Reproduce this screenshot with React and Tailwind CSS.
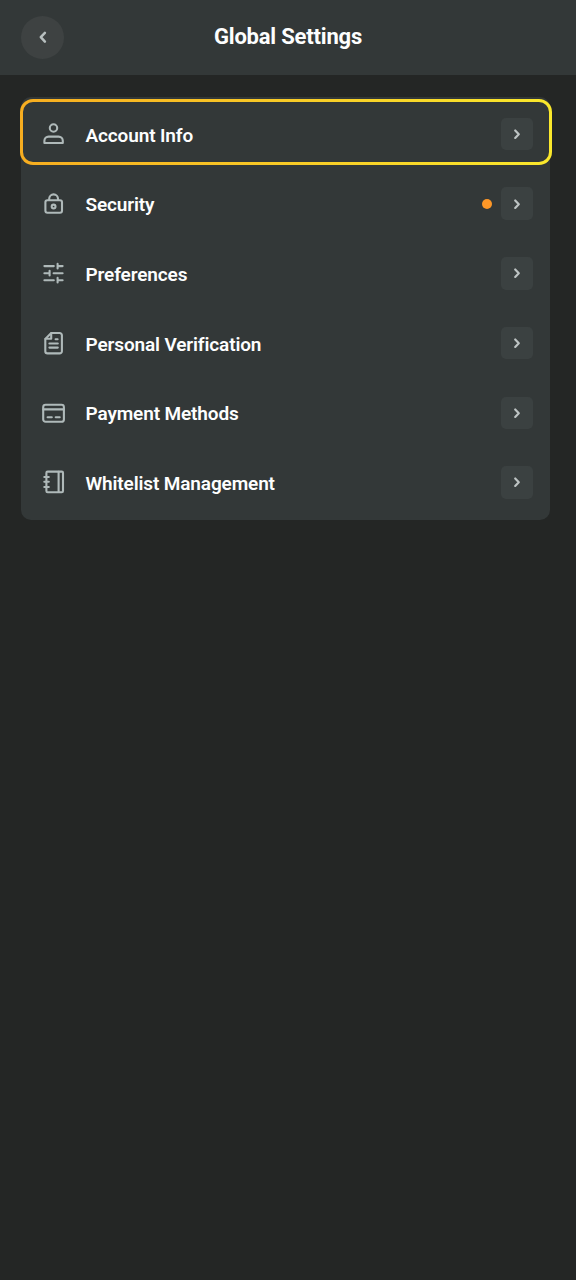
import React from "react";

const Icon = ({ children }) => (
  <svg
    className="h-7 w-7 shrink-0 text-[#afb9b9]"
    viewBox="0 0 28 28"
    fill="none"
    stroke="currentColor"
    strokeWidth="2.1"
    strokeLinecap="round"
    strokeLinejoin="round"
  >
    {children}
  </svg>
);

const AccountIcon = () => (
  <Icon>
    <circle cx="13.5" cy="8" r="3.7" />
    <path d="M4.4 23v-2.2a4.2 4.2 0 0 1 4.2-4.2h10a4.2 4.2 0 0 1 4.2 4.2V23z" />
  </Icon>
);

const LockIcon = () => (
  <Icon>
    <rect x="5.4" y="10.2" width="16.6" height="12.6" rx="2" />
    <path d="M9.2 10V8.8a4.4 4.4 0 0 1 8.8 0V10" />
    <circle cx="13.6" cy="16.5" r="1.9" />
  </Icon>
);

const SlidersIcon = () => (
  <Icon>
    <path d="M4.4 7.1h9.4M17.6 4.9v4.6M17.6 7.1h5" />
    <path d="M4.4 14.2h4.6M9.6 11.7v4.8M13.6 14.2h9" />
    <path d="M4.4 21.2h9.4M17.6 18.9v4.6M17.6 21.2h5" />
  </Icon>
);

const DocumentIcon = () => (
  <Icon>
    <path d="M11.2 4h8.5a2.2 2.2 0 0 1 2.2 2.2v16a2.2 2.2 0 0 1-2.2 2.2H7.5a2.2 2.2 0 0 1-2.2-2.2V9.9z" />
    <path d="M11.2 4.4v5.4H5.6" />
    <path d="M15.6 10.3h2M9.4 14.5h8.4M9.4 18.6h8.4" />
  </Icon>
);

const CardIcon = () => (
  <Icon>
    <rect x="3.2" y="5.8" width="20.7" height="17" rx="2.4" />
    <path d="M3.4 10.4h20.3M7.6 18.3h4.2M15.7 18.3h4" />
  </Icon>
);

const NotebookIcon = () => (
  <Icon>
    <rect x="6.4" y="3.6" width="16.6" height="20.6" rx="1.2" />
    <path d="M18.6 3.8V24M4.3 9h4.5M4.3 13.8h4.5M4.3 19h4.5" />
  </Icon>
);

const items = [
  { label: "Account Info", icon: AccountIcon, active: true },
  { label: "Security", icon: LockIcon, alert: true },
  { label: "Preferences", icon: SlidersIcon },
  { label: "Personal Verification", icon: DocumentIcon },
  { label: "Payment Methods", icon: CardIcon },
  { label: "Whitelist Management", icon: NotebookIcon },
];

const SettingsRow = ({ item }) => {
  const RowIcon = item.icon;

  return (
    <li className="relative flex h-[69.7px] items-center pr-[16.5px] pl-[19px]">
      {/* Highlight ring */}
      {item.active && (
        <div className="absolute top-0 -right-[2.5px] -left-[1px] h-[66px] rounded-[13px] border-3 border-transparent [background:linear-gradient(#333838,#333838)_padding-box,linear-gradient(90deg,#f7ad20,#fae82c)_border-box]" />
      )}
      <div className="relative flex flex-1 items-center">
        <RowIcon />
        <span className="mt-[3px] ml-[17.5px] flex-1 text-[19px] leading-6 font-semibold tracking-[-0.13px] text-[#fdfefe]">
          {item.label}
        </span>
        {item.alert && (
          <span className="mr-[8.4px] h-2.5 w-2.5 rounded-full bg-[#fd9727]" />
        )}
        <button className="flex h-[32.5px] w-[32.5px] items-center justify-center rounded-[5px] bg-[#3b4141]">
          <svg
            className="h-3 w-3 text-[#bdc3c3]"
            viewBox="0 0 12 12"
            fill="none"
            stroke="currentColor"
            strokeWidth="2.2"
            strokeLinecap="round"
            strokeLinejoin="round"
          >
            <path d="M4.2 2.5 7.8 6.2 4.2 9.9" />
          </svg>
        </button>
      </div>
    </li>
  );
};

const App = () => {
  return (
    <div className="min-h-screen bg-[#242625] font-[Roboto,sans-serif]">
      <header className="flex h-[75.4px] items-center bg-[#333838] px-[21px]">
        <button className="flex h-[43px] w-[43px] items-center justify-center rounded-full bg-[#3e4242]">
          <svg
            className="h-4 w-4 text-[#b7bfbf]"
            viewBox="0 0 16 16"
            fill="none"
            stroke="currentColor"
            strokeWidth="2.5"
            strokeLinecap="round"
            strokeLinejoin="round"
          >
            <path d="M9.9 2.8 5.8 7.1l4.1 4.5" />
          </svg>
        </button>
        <h1 className="mr-[43px] flex-1 pb-[2px] text-center text-[22px] leading-7 font-bold tracking-[-0.2px] text-[#fdfefe]">
          Global Settings
        </h1>
      </header>

      <main className="pt-[21.8px] pr-[26.5px] pl-[21px]">
        <ul className="h-[423px] rounded-[10px] bg-[#333838] pt-[2px]">
          {items.map((item) => (
            <SettingsRow key={item.label} item={item} />
          ))}
        </ul>
      </main>
    </div>
  );
};

export default App;
